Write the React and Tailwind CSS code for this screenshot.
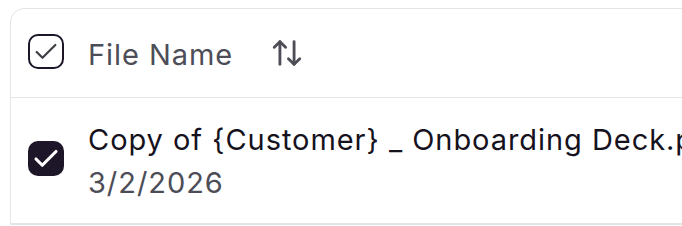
import React from "react";

function Check({ className, sw = 2 }) {
  return (
    <svg viewBox="0 0 24 24" fill="none" stroke="currentColor" strokeWidth={sw} strokeLinecap="round" strokeLinejoin="round" className={className}>
      <path d="M20 6 9 17l-5-5" />
    </svg>
  );
}

function SortIcon({ className }) {
  return (
    <svg viewBox="0 0 24 24" fill="none" stroke="currentColor" strokeWidth="2" strokeLinecap="round" strokeLinejoin="round" className={className}>
      <path d="m21 16-4 4-4-4" />
      <path d="M17 20V4" />
      <path d="m3 8 4-4 4 4" />
      <path d="M7 4v16" />
    </svg>
  );
}

export default function App() {
  return (
    <div className="w-[682px] h-[226px] overflow-hidden bg-white" style={{ fontFamily: "Inter, 'Noto Sans', sans-serif" }}>
      <div className="ml-[10px] mt-[8px] w-[900px] border border-[#e4e4e7] rounded-tl-[14px]">
        <div className="h-[89px] flex items-center pl-[17px] border-b border-[#e4e4e7]">
          <div className="w-[36px] h-[35px] mb-[3px] rounded-[10px] border-2 border-[#1c1628] flex items-center justify-center text-[#3f3f46] bg-white shrink-0">
            <Check className="w-[28px] h-[28px]" sw={1.9} />
          </div>
          <span className="ml-[24px] text-[29px] leading-[40px] tracking-[0.95px] text-[#4d4d57] mt-[4px]">File Name</span>
          <SortIcon className="ml-[37px] w-[34px] h-[34px] text-[#4d4d57]" />
        </div>
        <div className="h-[126px] flex items-center pl-[17px] border-b border-[#e4e4e7]">
          <div className="w-[36px] h-[35px] mb-[4px] rounded-[10px] bg-[#1c1628] flex items-center justify-center text-white shrink-0">
            <Check className="w-[30px] h-[30px]" sw={2.5} />
          </div>
          <div className="ml-[24px] mt-[2px] flex flex-col">
            <span className="text-[29px] leading-[40px] tracking-[0.95px] text-[#16121d] whitespace-nowrap">Copy of {"{Customer}"} _ Onboarding Deck.pdf</span>
            <span className="text-[29px] leading-[40px] tracking-[0.95px] text-[#4d4d57] mt-[3px]">3/2/2026</span>
          </div>
        </div>
      </div>
    </div>
  );
}
